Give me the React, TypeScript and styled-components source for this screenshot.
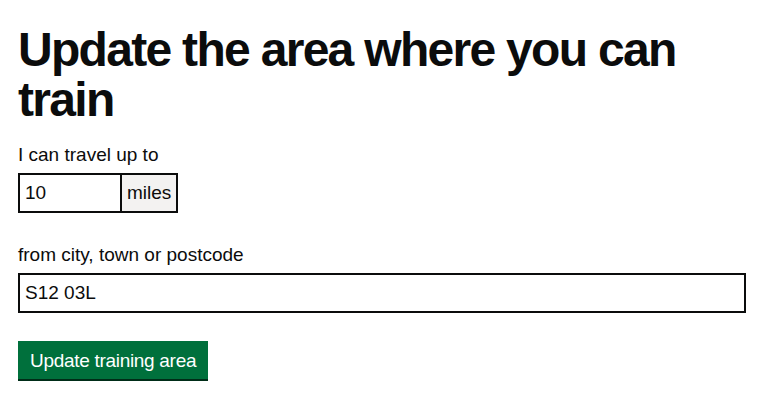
import React from "react";
import styled, { createGlobalStyle } from "styled-components";

const Global = createGlobalStyle`
  html, body { margin: 0; padding: 0; background: #fff; }
  body { font-family: "Liberation Sans", Arial, sans-serif; color: #0b0c0c; }
  * { box-sizing: border-box; }
`;

const Page = styled.main`
  padding: 25px 21px 20px 18px;
`;

const Heading = styled.h1`
  margin: 0 0 17px;
  font-size: 48px;
  line-height: 50px;
  font-weight: 700;
  letter-spacing: -1.7px;
`;

const Field = styled.div<{ $gap?: number }>`
  display: flex;
  flex-direction: column;
  align-items: flex-start;
  margin-bottom: ${(p) => p.$gap ?? 29}px;
`;

const Label = styled.label`
  font-size: 19px;
  line-height: 25px;
  margin-bottom: 6px;
`;

const InputWrap = styled.div`
  display: flex;
  align-self: stretch;
`;

const Input = styled.input<{ $width?: string }>`
  height: 40px;
  width: ${(p) => p.$width ?? "100%"};
  border: 2px solid #0b0c0c;
  padding: 5px;
  font-family: inherit;
  font-size: 19px;
  color: #0b0c0c;
  border-radius: 0;
  outline: none;
`;

const Suffix = styled.div`
  height: 40px;
  padding: 0 5px;
  display: flex;
  align-items: center;
  border: 2px solid #0b0c0c;
  border-left: 0;
  background: #f3f2f1;
  font-size: 19px;
`;

const Button = styled.button`
  background: #00703c;
  color: #fff;
  border: 0;
  box-shadow: 0 2px 0 #002d18;
  padding: 8px 12px 7px;
  font-family: inherit;
  font-size: 19px;
  line-height: 23px;
  letter-spacing: -0.3px;
  border-radius: 0;
`;

export default function App() {
  return (
    <>
      <Global />
      <Page>
        <Heading>Update the area where you can train</Heading>
        <Field>
          <Label htmlFor="distance">I can travel up to</Label>
          <InputWrap>
            <Input id="distance" $width="104px" defaultValue="10" />
            <Suffix>miles</Suffix>
          </InputWrap>
        </Field>
        <Field $gap={28}>
          <Label htmlFor="postcode">from city, town or postcode</Label>
          <Input id="postcode" defaultValue="S12 03L" />
        </Field>
        <Button>Update training area</Button>
      </Page>
    </>
  );
}
